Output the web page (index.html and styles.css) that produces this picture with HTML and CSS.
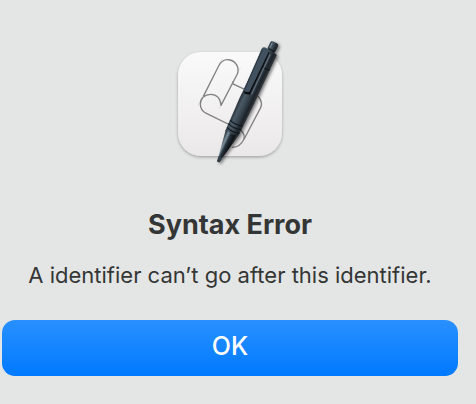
FILE: index.html
```html
<!DOCTYPE html>
<html lang="en">
<head>
    <meta charset="UTF-8">
    <meta name="viewport" content="width=device-width, initial-scale=1.0">
    <title>Syntax Error</title>
    <link rel="stylesheet" href="styles.css">
</head>
<body>
    <main class="alert" role="alertdialog" aria-labelledby="alert-title" aria-describedby="alert-message">
        <svg class="alert-icon" viewBox="0 0 390 405" aria-hidden="true">
            <defs>
                <linearGradient id="tile" x1="0" y1="0" x2="0" y2="1">
                    <stop offset="0" stop-color="#fafafa"/>
                    <stop offset="1" stop-color="#ebe8ea"/>
                </linearGradient>
                <linearGradient id="barrel" x1="0" y1="0" x2="1" y2="0">
                    <stop offset="0" stop-color="#26313a"/>
                    <stop offset="0.25" stop-color="#4b5a66"/>
                    <stop offset="0.55" stop-color="#35414b"/>
                    <stop offset="0.8" stop-color="#1d242a"/>
                    <stop offset="1" stop-color="#33383c"/>
                </linearGradient>
                <linearGradient id="cone" x1="0" y1="0" x2="1" y2="0">
                    <stop offset="0" stop-color="#1b242b"/>
                    <stop offset="0.28" stop-color="#7c929e"/>
                    <stop offset="0.45" stop-color="#27323a"/>
                    <stop offset="0.75" stop-color="#0d1216"/>
                    <stop offset="1" stop-color="#46494b"/>
                </linearGradient>
                <filter id="tile-shadow" x="-10%" y="-10%" width="120%" height="125%">
                    <feDropShadow dx="0" dy="4" stdDeviation="4" flood-opacity="0.3"/>
                </filter>
                <filter id="pen-shadow" x="-30%" y="-10%" width="160%" height="120%">
                    <feDropShadow dx="5" dy="4" stdDeviation="5" flood-opacity="0.5"/>
                </filter>
            </defs>

            <rect x="39" y="51" width="312" height="312" rx="70" fill="url(#tile)" filter="url(#tile-shadow)"/>

            <!-- guide lines -->
            <g stroke="#d8d8d8" stroke-width="2">
                <path d="M172 70 L160 95 M226 97 L216 118 M110 190 L99 212 M168 211 L162 222"/>
            </g>

            <!-- scroll -->
            <g fill="none" stroke="#818181" stroke-width="4" stroke-linejoin="round">
                <path d="M115 184 L161 93 C169 77 182 72 195 75 C214 80 224 99 217 117 L168 211 C166 190 154 178 137 178 C119 178 106 190 106 207 C106 220 113 230 124 235 L220 282"/>
                <path d="M202 146 L265 175 C285 184 294 202 287 218 L239 309 C229 329 216 338 201 337 M202 146 L205 139"/>
                <path d="M220 282 C233 288 240 300 237 313"/>
            </g>

            <!-- pen -->
            <g filter="url(#pen-shadow)">
                <g transform="translate(160 380) rotate(25)">
                    <rect x="-10" y="-396" width="26" height="30" rx="7" fill="url(#barrel)"/>
                    <rect x="-7" y="-372" width="20" height="12" fill="#141a1f"/>
                    <path d="M-20 -366 Q2 -372 24 -364 L24 -200 L22 -93 Q0 -85 -20 -93 L-23 -200 Z" fill="url(#barrel)"/>
                    <path d="M-20 -96 Q0 -88 22 -96 L6 -15 L4 0 L-4 0 L-6 -15 Z" fill="url(#cone)"/>
                    <path d="M-6 -16 L6 -16 L4 1 L-4 1 Z" fill="#343e45"/>
                    <path d="M-21 -128 Q0 -120 22 -128 M-21 -116 Q0 -108 22 -116 M-20 -104 Q0 -96 22 -104" fill="none" stroke="#12181d" stroke-width="3"/>
                    <path d="M-20 -123 Q-8 -118 4 -119 M-20 -111 Q-8 -106 4 -107" fill="none" stroke="#51606b" stroke-width="2"/>
                    <path d="M-1 -315 Q12 -310 24 -315" fill="none" stroke="#12181d" stroke-width="3"/>
                    <path d="M-2 -362 L1 -362 L1 -222 L-15 -218 L-20 -225 L-4 -228 Z" fill="#080c10"/>
                    <path d="M-25 -363 Q-24 -370 -14 -370 L-4 -369 L-5 -230 Q-13 -222 -22 -227 Z" fill="#42515e"/>
                    <path d="M-23 -362 L-20 -230" stroke="#2a3640" stroke-width="3"/>
                    <path d="M5 -358 L5 -225" stroke="#687783" stroke-width="3"/>
                    <path d="M-4 -391 L-4 -375" stroke="#748490" stroke-width="4"/>
                </g>
            </g>
        </svg>

        <h1 class="alert-title" id="alert-title">Syntax Error</h1>
        <p class="alert-message" id="alert-message">A identifier can’t go after this identifier.</p>
        <button class="alert-btn" type="button" autofocus>OK</button>
    </main>
</body>
</html>
```
FILE: styles.css
```css
body {
    margin: 0;
    background: #e4e6e5;
    color: #343635;
    font-family: Inter, "Liberation Sans", sans-serif;
}

.alert {
    display: flex;
    flex-direction: column;
    align-items: center;
    padding: 35px 18px 28px 2px;
}

.alert-icon {
    width: 130px;
    height: 135px;
}

.alert-title {
    margin: 38px 0 0;
    font-size: 27px;
    font-weight: 700;
    line-height: 34px;
}

.alert-message {
    margin: 18px 0 0;
    font-size: 22px;
    line-height: 30px;
    text-align: center;
}

.alert-btn {
    width: 100%;
    height: 56px;
    margin-top: 30px;
    padding: 0 0 4px;
    border: none;
    border-radius: 13px;
    outline: none;
    background: linear-gradient(#2990ff, #007aff);
    color: #fff;
    font-family: inherit;
    font-size: 25px;
    font-weight: 500;
}

.alert-btn:active {
    background: linear-gradient(#1f80ea, #006ae0);
}
```
